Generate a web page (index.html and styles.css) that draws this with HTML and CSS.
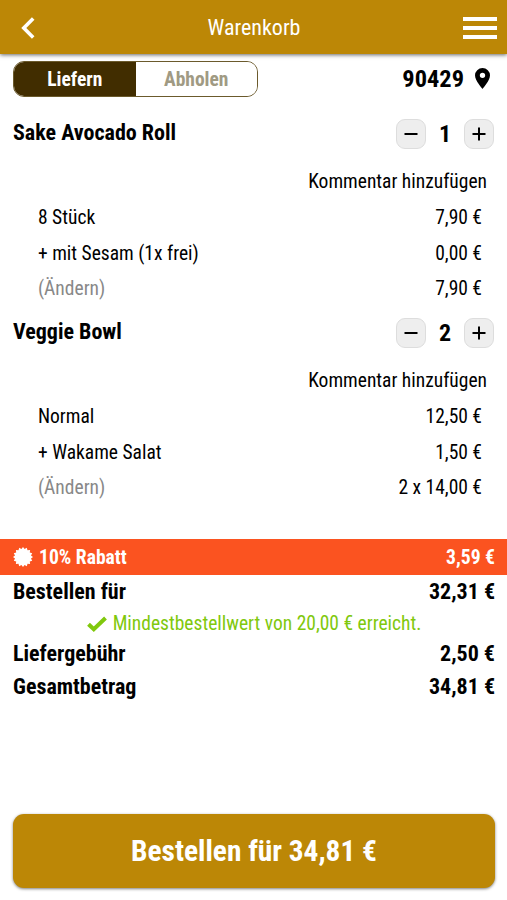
FILE: index.html
```html
<!DOCTYPE html>
<html lang="de">
<head>
    <meta charset="UTF-8">
    <meta name="viewport" content="width=device-width, initial-scale=1.0">
    <title>Warenkorb</title>
    <link rel="stylesheet" href="styles.css">
</head>
<body>
    <header class="topbar">
        <a href="#" class="back" aria-label="Zurück">
            <svg width="14" height="22" viewBox="0 0 14 22"><path d="M12.2 1.6L2.8 11l9.4 9.4" fill="none" stroke="#fff" stroke-width="3.6"/></svg>
        </a>
        <h1>Warenkorb</h1>
        <a href="#" class="menu" aria-label="Menü"><i></i><i></i><i></i></a>
    </header>

    <main>
        <div class="delivery">
            <div class="toggle">
                <button class="active">Liefern</button>
                <button>Abholen</button>
            </div>
            <a href="#" class="zip">
                <span>90429</span>
                <svg width="15" height="21" viewBox="0 0 14 20" preserveAspectRatio="none"><path fill-rule="evenodd" d="M7 0a7 7 0 0 0-7 7c0 5.200 7 13 7 13s7-7.800 7-13a7 7 0 0 0-7-7zm0 4.500a2.500 2.500 0 1 1 0 5 2.500 2.500 0 0 1 0-5z"/></svg>
            </a>
        </div>

        <section class="item">
            <div class="item-head">
                <h2>Sake Avocado Roll</h2>
                <div class="quantity">
                    <button aria-label="Weniger"><svg width="14" height="14" viewBox="0 0 14 14"><path d="M.5 7h13"/></svg></button>
                    <span>1</span>
                    <button aria-label="Mehr"><svg width="14" height="14" viewBox="0 0 14 14"><path d="M.5 7h13M7 .5v13"/></svg></button>
                </div>
            </div>
            <a href="#" class="comment">Kommentar hinzufügen</a>
            <div class="line"><span>8 Stück</span><span>7,90 €</span></div>
            <div class="line"><span>+ mit Sesam (1x frei)</span><span>0,00 €</span></div>
            <div class="line"><a href="#" class="change">(Ändern)</a><span>7,90 €</span></div>
        </section>

        <section class="item">
            <div class="item-head">
                <h2>Veggie Bowl</h2>
                <div class="quantity">
                    <button aria-label="Weniger"><svg width="14" height="14" viewBox="0 0 14 14"><path d="M.5 7h13"/></svg></button>
                    <span>2</span>
                    <button aria-label="Mehr"><svg width="14" height="14" viewBox="0 0 14 14"><path d="M.5 7h13M7 .5v13"/></svg></button>
                </div>
            </div>
            <a href="#" class="comment">Kommentar hinzufügen</a>
            <div class="line"><span>Normal</span><span>12,50 €</span></div>
            <div class="line"><span>+ Wakame Salat</span><span>1,50 €</span></div>
            <div class="line"><a href="#" class="change">(Ändern)</a><span>2 x 14,00 €</span></div>
        </section>

        <div class="discount">
            <svg width="20" height="20" viewBox="0 0 20 20"><path fill="#fff" d="M10 0l1.600 2L13.800.8l.7 2.400 2.600-.3-.3 2.600 2.400.7L18 8.400l2 1.600-2 1.600 1.200 2.200-2.400.7.3 2.600-2.600-.3-.7 2.400-2.200-1.200L10 20l-1.600-2-2.200 1.200-.7-2.400-2.600.3.3-2.600-2.400-.7L2 11.600 0 10l2-1.600L.8 6.200l2.400-.7-.3-2.600 2.600.3.7-2.400L8.400 2z"/></svg>
            <span>10% Rabatt</span>
            <span class="amount">3,59 €</span>
        </div>

        <div class="totals">
            <div class="total-row"><span>Bestellen für</span><span>32,31 €</span></div>
            <p class="minimum">
                <svg width="20" height="16" viewBox="0 0 20 16"><path d="M1.500 8.200l5.300 5L18.500 2" fill="none" stroke="#80c80d" stroke-width="4"/></svg>
                <span>Mindestbestellwert von 20,00 € erreicht.</span>
            </p>
            <div class="total-row"><span>Liefergebühr</span><span>2,50 €</span></div>
            <div class="total-row"><span>Gesamtbetrag</span><span>34,81 €</span></div>
        </div>
    </main>

    <button class="order">Bestellen für 34,81 €</button>
</body>
</html>
```
FILE: styles.css
```css
* {
    box-sizing: border-box;
}
body {
    margin: 0;
    height: 900px;
    display: flex;
    flex-direction: column;
    background: #fff;
    color: #000;
    font-family: "Roboto Condensed", Roboto, sans-serif;
    font-stretch: 75%;
    font-size: 19.5px;
    font-weight: 440;
    line-height: 24px;
}
button {
    font: inherit;
    font-stretch: 75%;
    color: inherit;
    border: none;
    padding: 0;
    cursor: pointer;
}
a {
    color: inherit;
    text-decoration: none;
}
svg {
    display: block;
    flex: none;
}
.topbar {
    height: 54px;
    flex: none;
    display: grid;
    grid-template-columns: 34px 1fr 34px;
    align-items: center;
    padding: 2px 10px 0 11px;
    background: #bc8706;
    box-shadow: 0 1px 4px rgba(0, 0, 0, 0.6);
}
.topbar h1 {
    margin: 0;
    font-size: 22px;
    font-weight: 440;
    text-align: center;
    color: #fff;
}
.back {
    padding-left: 10px;
}
.menu {
    display: grid;
    gap: 5px;
}
.menu i {
    height: 4px;
    background: #fff;
}
.delivery {
    display: flex;
    align-items: center;
    justify-content: space-between;
    padding: 7px 17px 0 13px;
}
.toggle {
    display: flex;
    width: 245px;
    height: 36px;
    border: 1px solid #6b5a2c;
    border-radius: 11px;
    overflow: hidden;
}
.toggle button {
    flex: 1;
    padding-top: 2px;
    background: #fff;
    color: #a09a83;
    font-weight: 700;
}
.toggle .active {
    background: #412d00;
    color: #fff;
}
.zip {
    display: flex;
    align-items: center;
    gap: 11px;
    font-size: 24.4px;
    font-weight: 700;
}
.zip svg {
    margin-top: -1px;
}
.item {
    height: 199px;
    padding: 22px 13px 0;
}
.item-head {
    display: flex;
    justify-content: space-between;
    height: 45px;
}
.item h2 {
    margin: 2px 0 0;
    font-size: 22px;
    line-height: 24px;
    font-weight: 700;
}
.quantity {
    display: flex;
    align-items: center;
    height: 30px;
    font-size: 24px;
    font-weight: 700;
}
.quantity span {
    width: 38px;
    text-align: center;
}
.quantity button {
    display: flex;
    align-items: center;
    justify-content: center;
    width: 30px;
    height: 30px;
    background: #eee;
    border: 1px solid #ddd;
    border-radius: 9px;
}
.quantity path {
    stroke: #000;
    stroke-width: 2;
}
.comment {
    display: block;
    height: 36px;
    line-height: 36px;
    padding-right: 7px;
    text-align: right;
}
.line {
    display: flex;
    justify-content: space-between;
    height: 35.5px;
    line-height: 36px;
    padding: 0 12px 0 25px;
}
.change {
    color: #888;
}
.discount {
    display: flex;
    align-items: center;
    gap: 6px;
    height: 36px;
    margin-top: 44px;
    padding: 0 12px 0 13px;
    background: #fb5320;
    color: #fff;
    font-size: 19.6px;
    font-weight: 700;
}
.discount svg {
    margin-top: -1px;
}
.discount span {
    padding-top: 1px;
}
.amount {
    margin-left: auto;
}
.totals {
    padding: 0 12px 0 13px;
}
.total-row {
    display: flex;
    justify-content: space-between;
    font-size: 22px;
    line-height: 33px;
    font-weight: 700;
}
.minimum {
    display: flex;
    align-items: center;
    justify-content: center;
    gap: 6px;
    height: 29px;
    padding-top: 2px;
    margin: 0;
    color: #80c80d;
}
.order {
    flex: none;
    height: 74px;
    margin: auto 12px 12px 13px;
    border-radius: 11px;
    background: #bc8706;
    box-shadow: 0 1px 3px rgba(0, 0, 0, 0.5);
    color: #fff;
    font-size: 29.4px;
    font-weight: 700;
}
```
